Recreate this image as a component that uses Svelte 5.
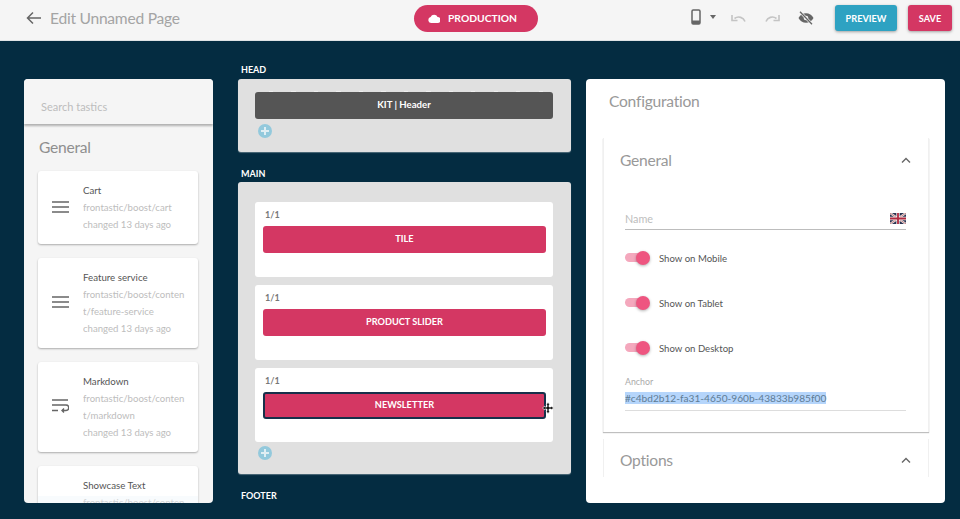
<script>
  const tastics = [
    { name: 'Cart', path: ['frontastic/boost/cart'], icon: 'menu', changed: true },
    { name: 'Feature service', path: ['frontastic/boost/conten', 't/feature-service'], icon: 'menu', changed: true },
    { name: 'Markdown', path: ['frontastic/boost/conten', 't/markdown'], icon: 'wrap', changed: true },
    { name: 'Showcase Text', path: ['frontastic/boost/conten'], icon: 'none', changed: false }
  ];
  const rows = [
    { label: 'TILE' },
    { label: 'PRODUCT SLIDER' },
    { label: 'NEWSLETTER', active: true }
  ];
  const toggles = ['Show on Mobile', 'Show on Tablet', 'Show on Desktop'];
</script>

<div class="page">
  <header class="topbar">
    <div class="title">
      <svg class="back" width="16" height="14" viewBox="0 0 16 14"><path d="M15 7H2M7 1.500 1.500 7 7 12.500" fill="none" stroke="#666" stroke-width="1.500"/></svg>
      <span>Edit Unnamed Page</span>
    </div>
    <div class="env">
      <svg width="12" height="9" viewBox="0 0 12 9"><path d="M3 9a3 3 0 0 1-.4-5.900A3.800 3.800 0 0 1 9.600 3 3 3 0 0 1 9.500 9z" fill="#fff"/></svg>
      <span>PRODUCTION</span>
    </div>
    <div class="actions">
      <svg class="phone" width="10" height="16" viewBox="0 0 10 16"><rect x="1" y="1" width="8" height="14" rx="1.200" fill="none" stroke="#666" stroke-width="1.500"/><rect x="1" y="11.500" width="8" height="3.500" fill="#666"/></svg>
      <span class="caret"></span>
      <svg class="undo" width="15" height="8" viewBox="0 0 15 8"><path d="M14 7.500C12.500 3.500 7.500 1.500 3.500 4.500M1 1v5.500h5.500" fill="none" stroke="#c4c4c4" stroke-width="1.600"/></svg>
      <svg class="redo" width="15" height="8" viewBox="0 0 15 8"><path d="M1 7.500C2.500 3.500 7.500 1.500 11.500 4.500M14 1v5.500H8.500" fill="none" stroke="#c4c4c4" stroke-width="1.600"/></svg>
      <svg class="eye" width="16" height="14" viewBox="0 0 16 14"><path d="M.5 7C2 3.800 4.800 2.200 8 2.200s6 1.600 7.500 4.800C14 10.200 11.200 11.800 8 11.800S2 10.200.5 7z" fill="#666"/><circle cx="8" cy="7" r="2.300" fill="#f5f5f5"/><path d="M2 .8 14 13.200" stroke="#f5f5f5" stroke-width="2.600"/><path d="M2 .8 14 13.200" stroke="#666" stroke-width="1.300"/></svg>
      <button class="btn preview">PREVIEW</button>
      <button class="btn save">SAVE</button>
    </div>
  </header>

  <main class="workspace">
    <aside class="panel tastics">
      <div class="search">Search tastics</div>
      <h2>General</h2>
      <div class="cards">
        {#each tastics as t}
          <article class="card" class:faded={!t.changed}>
            <div class="card-icon">
              {#if t.icon === 'menu'}
                <svg width="17" height="12" viewBox="0 0 17 12"><path d="M0 1h17M0 6h17M0 11h17" stroke="#666" stroke-width="1.600"/></svg>
              {:else if t.icon === 'wrap'}
                <svg width="17" height="14" viewBox="0 0 17 14"><path d="M0 1h16M0 6h14a2.700 2.700 0 0 1 0 5.500H10M12 9.500 10 11.500 12 13.500M0 11.500h6" fill="none" stroke="#666" stroke-width="1.400"/></svg>
              {/if}
            </div>
            <div class="card-text">
              <div class="card-name">{t.name}</div>
              {#each t.path as line}
                <div class="card-meta">{line}</div>
              {/each}
              {#if t.changed}
                <div class="card-meta">changed 13 days ago</div>
              {/if}
            </div>
          </article>
        {/each}
      </div>
    </aside>

    <section class="stage">
      <div class="region-label head-label">HEAD</div>
      <div class="region head">
        <div class="kit">KIT | Header</div>
        <span class="add"></span>
      </div>
      <div class="region-label">MAIN</div>
      <div class="region main-region">
        {#each rows as r}
          <div class="row">
            <div class="ratio">1/1</div>
            <div class="block" class:active={r.active}>
              {r.label}
              {#if r.active}
                <svg class="cursor" width="12" height="12" viewBox="0 0 12 12"><path d="M6 .5 8 2.800H7V5h2.200V4L11.500 6 9.200 8V7H7v2.200h1L6 11.500 4 9.200h1V7H2.800v1L.5 6l2.300-2v1H5V2.800H4z" fill="#111" stroke="#fff" stroke-width=".6"/></svg>
              {/if}
            </div>
          </div>
        {/each}
        <span class="add"></span>
      </div>
      <div class="region-label">FOOTER</div>
    </section>

    <aside class="panel config">
      <h1>Configuration</h1>
      <section class="accordion general">
        <div class="acc-head">
          <h2>General</h2>
          <svg width="10" height="6" viewBox="0 0 10 6"><path d="M1 5.500 5 1.500l4 4" fill="none" stroke="#666" stroke-width="1.400"/></svg>
        </div>
        <div class="field name">
          <span>Name</span>
          <svg width="16" height="11" viewBox="0 0 16 11">
            <rect width="16" height="11" fill="#2b3350"/>
            <path d="M0 0 16 11M16 0 0 11" stroke="#eee" stroke-width="2.200"/>
            <path d="M0 0 16 11M16 0 0 11" stroke="#a33" stroke-width=".6"/>
            <path d="M8 0v11M0 5.500h16" stroke="#eee" stroke-width="3.400"/>
            <path d="M8 0v11M0 5.500h16" stroke="#b2283f" stroke-width="1.800"/>
          </svg>
        </div>
        {#each toggles as label}
          <div class="toggle-row">
            <span class="toggle"><span class="knob"></span></span>
            <span class="toggle-label">{label}</span>
          </div>
        {/each}
        <div class="anchor">
          <div class="anchor-label">Anchor</div>
          <div class="anchor-value"><span>#c4bd2b12-fa31-4650-960b-43833b985f00</span></div>
        </div>
      </section>
      <section class="accordion options">
        <div class="acc-head">
          <h2>Options</h2>
          <svg width="10" height="6" viewBox="0 0 10 6"><path d="M1 5.500 5 1.500l4 4" fill="none" stroke="#666" stroke-width="1.400"/></svg>
        </div>
      </section>
    </aside>
  </main>
</div>

<style>
  :global(body) { margin: 0; background: #042c41; }
  .page { width: 960px; height: 519px; overflow: hidden; background: #042c41; font-family: Lato, "Open Sans", sans-serif; color: #555; }
  .topbar { height: 41px; box-sizing: border-box; background: #f5f5f5; border-bottom: 1px solid #dfe3e5; display: flex; align-items: center; padding: 0 8px 4px 26px; }
  .title { display: flex; align-items: center; gap: 8px; font-size: 15.600px; letter-spacing: -.25px; color: #a4a4a4; width: 388px; }
  .env { width: 124px; height: 27px; box-sizing: border-box; border-radius: 14px; background: #d43763; color: #fff; display: flex; align-items: center; gap: 8px; padding-left: 14px; font-size: 10.300px; font-weight: 700; }
  .actions { display: flex; align-items: center; justify-content: flex-end; flex: 1; }
  .phone { margin-right: 9px; margin-top: -3px; }
  .caret { width: 0; height: 0; border: 3.500px solid transparent; border-top: 4px solid #666; border-bottom: 0; margin-right: 15px; margin-top: -3px; }
  .undo { margin-right: 19px; }
  .redo { margin-right: 18px; }
  .eye { margin-right: 21px; }
  .btn { border: 0; height: 26px; border-radius: 3px; color: #fff; font: 700 9.200px Lato, sans-serif; box-shadow: 0 1px 3px rgba(0,0,0,.35); padding: 0; }
  .preview { width: 62px; background: #2ea2c2; margin-right: 11px; }
  .save { width: 44px; background: #d43763; }

  .workspace { display: flex; padding-left: 24px; height: 478px; }
  .panel { margin-top: 38px; height: 424px; background: #f5f5f5; border-radius: 4px; overflow: hidden; }
  .tastics { width: 189px; margin-right: 25px; flex: none; }
  .stage { width: 333px; margin-right: 15px; flex: none; display: flex; flex-direction: column; }
  .config { width: 359px; flex: none; background: #fff; }

  .search { height: 45px; box-sizing: border-box; padding: 21px 0 0 17px; font-size: 11px; color: #bdbdbd; box-shadow: 0 2px 2px rgba(0,0,0,.28); background: #f5f5f5; }
  .tastics h2 { margin: 13px 0 13px 15px; font-size: 15.600px; letter-spacing: -.25px; font-weight: 400; color: #8f8f8f; line-height: 21px; }
  .cards { display: flex; flex-direction: column; gap: 14px; padding: 0 15px 0 14px; }
  .card { background: #fff; border-radius: 3px; box-shadow: 0 1px 2px rgba(0,0,0,.3); display: flex; align-items: center; padding: 11px 0; position: relative; }
  .card.faded::after { content: ""; position: absolute; left: 0; right: 0; top: 30px; height: 10px; background: rgba(238,245,250,.4); }
  .card-icon { width: 45px; flex: none; display: flex; justify-content: center; margin-top: -2px; }
  .card-text { flex: 1; min-width: 0; }
  .card-name { font-size: 9.700px; color: #555; line-height: 17px; }
  .card-meta { font-size: 9.600px; color: #bdbdbd; line-height: 17px; white-space: nowrap; overflow: hidden; }

  .region-label { color: #fff; font-size: 9px; font-weight: 700; line-height: 13px; padding-left: 3px; margin: 15px 0 2px; }
  .head-label { margin-top: 22px; margin-bottom: 3px; }
  .region { background: #e0e0e0; border-radius: 3px; box-sizing: border-box; padding: 0 18px 0 17px; box-shadow: 0 1px 1px rgba(255,255,255,.3); }
  .head { height: 73px; padding-top: 13px; }
  .kit { height: 27px; background: #555; border-radius: 3px; color: #fff; font-size: 9.600px; font-weight: 700; display: flex; align-items: center; justify-content: center; padding-bottom: 2px; box-sizing: border-box; position: relative; }
  .kit::before { content: ""; position: absolute; left: 14px; right: 8px; top: -1px; height: 1px; background: repeating-linear-gradient(90deg, #f0f0f0 0 4px, transparent 4px 22.500px); }
  .add { display: block; width: 14px; height: 14px; margin: 5px 0 0 3px; border-radius: 50%; background: #93c9dc; position: relative; }
  .add::before, .add::after { content: ""; position: absolute; background: #e0eef3; left: 3px; top: 6.300px; width: 8px; height: 1.400px; }
  .add::after { left: 6.300px; top: 3px; width: 1.400px; height: 8px; }
  .main-region { height: 292px; padding-top: 20px; display: flex; flex-direction: column; }
  .main-region .add { margin-top: 4px; }
  .row { height: 75px; margin-bottom: 8px; box-sizing: border-box; background: #fff; border-radius: 3px; padding: 6px 7px 0 8px; }
  .row:nth-child(3) { margin-bottom: 0; height: 74px; }
  .ratio { font-size: 9px; font-weight: 700; color: #777; line-height: 13px; padding-left: 2px; margin-bottom: 5px; }
  .block { height: 27px; box-sizing: border-box; background: #d43763; border-radius: 3px; color: #fff; font-size: 9.200px; font-weight: 700; display: flex; align-items: center; justify-content: center; padding-bottom: 3px; position: relative; }
  .block.active { border: 2px solid #17304a; }
  .cursor { position: absolute; right: -10px; top: 8px; }

  .config h1 { margin: 0; padding: 11px 0 0 23px; font-size: 15.600px; letter-spacing: -.25px; font-weight: 400; color: #999; line-height: 22px; height: 47px; box-sizing: border-box; }
  .accordion { margin: 0 16px 0 17px; background: #fff; border: 1px solid #f0f0f0; border-width: 0 1px; box-sizing: border-box; }
  .general { margin-top: 12px; height: 294px; box-shadow: 0 1px 1px rgba(0,0,0,.25); padding: 0 22px 0 21px; }
  .options { margin-top: 7px; height: 38px; padding: 0 22px 0 21px; }
  .acc-head { display: flex; align-items: center; justify-content: space-between; height: 43px; margin: 0 -5px; }
  .options .acc-head { height: 42px; }
  .acc-head h2 { margin: 0; font-size: 15.600px; letter-spacing: -.25px; font-weight: 400; color: #999; }
  .field.name { margin-top: 27px; height: 22px; box-sizing: border-box; display: flex; justify-content: space-between; align-items: center; border-bottom: 1px solid #bdbdbd; font-size: 10.800px; color: #bdbdbd; padding-top: 1px; padding-bottom: 1px; }
  .toggle-row { height: 45px; display: flex; align-items: center; gap: 10px; font-size: 9.600px; color: #555; }
  .toggle-label { padding-top: 1px; }
  .field.name + .toggle-row { margin-top: 5px; }
  .toggle { width: 24px; height: 9px; border-radius: 5px; background: #f4a8bd; position: relative; display: block; flex: none; }
  .knob { position: absolute; right: -1px; top: -2.500px; width: 14px; height: 14px; border-radius: 50%; background: #ee5580; box-shadow: 0 1px 3px rgba(0,0,0,.3); }
  .anchor { margin-top: 6px; }
  .anchor-label { font-size: 8.800px; color: #aaa; line-height: 11px; }
  .anchor-value { font-size: 10.150px; color: #5e7c95; line-height: 13px; margin-top: 5px; padding-bottom: 5px; border-bottom: 1px solid #ddd; white-space: nowrap; }
  .anchor-value span { background: #b5d5fb; }
</style>
